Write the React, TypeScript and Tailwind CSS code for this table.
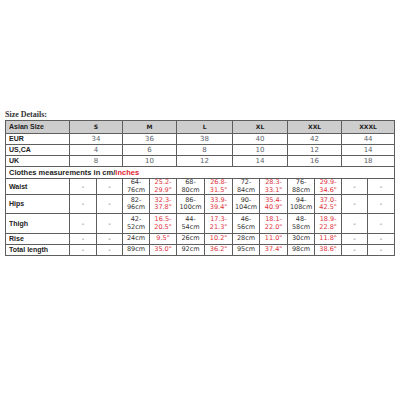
import React from "react"

const sizes = ["S", "M", "L", "XL", "XXL", "XXXL"]

const topRows: [string, string[]][] = [
  ["EUR", ["34", "36", "38", "40", "42", "44"]],
  ["US,CA", ["4", "6", "8", "10", "12", "14"]],
  ["UK", ["8", "10", "12", "14", "16", "18"]],
]

// each measurement: [cm, inch] per size, null = "-"
type Pair = [string, string] | null
const measureRows: { label: string; h: string; cells: Pair[] }[] = [
  {
    label: "Waist",
    h: "h-[16px]",
    cells: [null, ["64-\n76cm", "25.2-\n29.9\""], ["68-\n80cm", "26.8-\n31.5\""], ["72-\n84cm", "28.3-\n33.1\""], ["76-\n88cm", "29.9-\n34.6\""], null],
  },
  {
    label: "Hips",
    h: "h-[19px]",
    cells: [null, ["82-\n96cm", "32.3-\n37.8\""], ["86-\n100cm", "33.9-\n39.4\""], ["90-\n104cm", "35.4-\n40.9\""], ["94-\n108cm", "37.0-\n42.5\""], null],
  },
  {
    label: "Thigh",
    h: "h-[20px]",
    cells: [null, ["42-\n52cm", "16.5-\n20.5\""], ["44-\n54cm", "17.3-\n21.3\""], ["46-\n56cm", "18.1-\n22.0\""], ["48-\n58cm", "18.9-\n22.8\""], null],
  },
  {
    label: "Rise",
    h: "h-[11px]",
    cells: [null, ["24cm", "9.5\""], ["26cm", "10.2\""], ["28cm", "11.0\""], ["30cm", "11.8\""], null],
  },
  {
    label: "Total length",
    h: "h-[11px]",
    cells: [null, ["89cm", "35.0\""], ["92cm", "36.2\""], ["95cm", "37.4\""], ["98cm", "38.6\""], null],
  },
]

const colWidths = [64, 27, 26, 27, 27, 28, 28, 27, 28, 27, 27, 26, 27]

const cell = "border border-[#5e5e5e] p-0"
const label = "font-['Liberation_Sans',sans-serif] pl-[3px] text-[7px] font-bold leading-[8px] text-[#222]"

export default function App() {
  return (
    <div className="min-h-[400px] w-[400px] bg-white pl-[5px] pt-[110px] font-['DejaVu_Sans',sans-serif]">
      <div className="h-[10px] font-['Liberation_Serif',serif] text-[8px] font-bold leading-[10px] text-[#333]">
        Size Details:
      </div>
      <table className="w-[389px] table-fixed border-collapse border border-[#444]">
        <colgroup>
          {colWidths.map((w, i) => (
            <col key={i} style={{ width: w }} />
          ))}
        </colgroup>
        <tbody>
          <tr className="h-[13px] bg-[#cdcdcd]">
            <td className={`${cell} ${label}`}>Asian Size</td>
            {sizes.map((s) => (
              <td key={s} colSpan={2} className={`${cell} text-center text-[6px] font-bold leading-[8px] text-[#222]`}>
                {s}
              </td>
            ))}
          </tr>
          {topRows.map(([name, vals]) => (
            <tr key={name} className="h-[11px]">
              <td className={`${cell} ${label}`}>{name}</td>
              {vals.map((v, i) => (
                <td key={i} colSpan={2} className={`${cell} text-center text-[7px] leading-[8px] text-[#5a5f6a]`}>
                  {v}
                </td>
              ))}
            </tr>
          ))}
          <tr className="h-[12px]">
            <td
              colSpan={13}
              className={`${cell} pl-[3px] font-['Liberation_Sans',sans-serif] text-[7.5px] font-bold leading-[10px] text-[#222]`}
            >
              Clothes measurements in cm/<span className="text-[#e0202e]">inches</span>
            </td>
          </tr>
          {measureRows.map((row) => (
            <tr key={row.label} className={row.h}>
              <td className={`${cell} ${label}`}>{row.label}</td>
              {row.cells.map((c, i) =>
                c ? (
                  <React.Fragment key={i}>
                    <td className={`${cell} whitespace-pre text-center text-[6.5px] leading-[7.5px] text-[#333]`}>{c[0]}</td>
                    <td className={`${cell} whitespace-pre text-center text-[6.5px] leading-[7.5px] text-[#e0303c]`}>{c[1]}</td>
                  </React.Fragment>
                ) : (
                  <React.Fragment key={i}>
                    <td className={`${cell} text-center text-[7px] leading-[8px] text-[#555]`}>-</td>
                    <td className={`${cell} text-center text-[7px] leading-[8px] text-[#555]`}>-</td>
                  </React.Fragment>
                ),
              )}
            </tr>
          ))}
        </tbody>
      </table>
    </div>
  )
}
